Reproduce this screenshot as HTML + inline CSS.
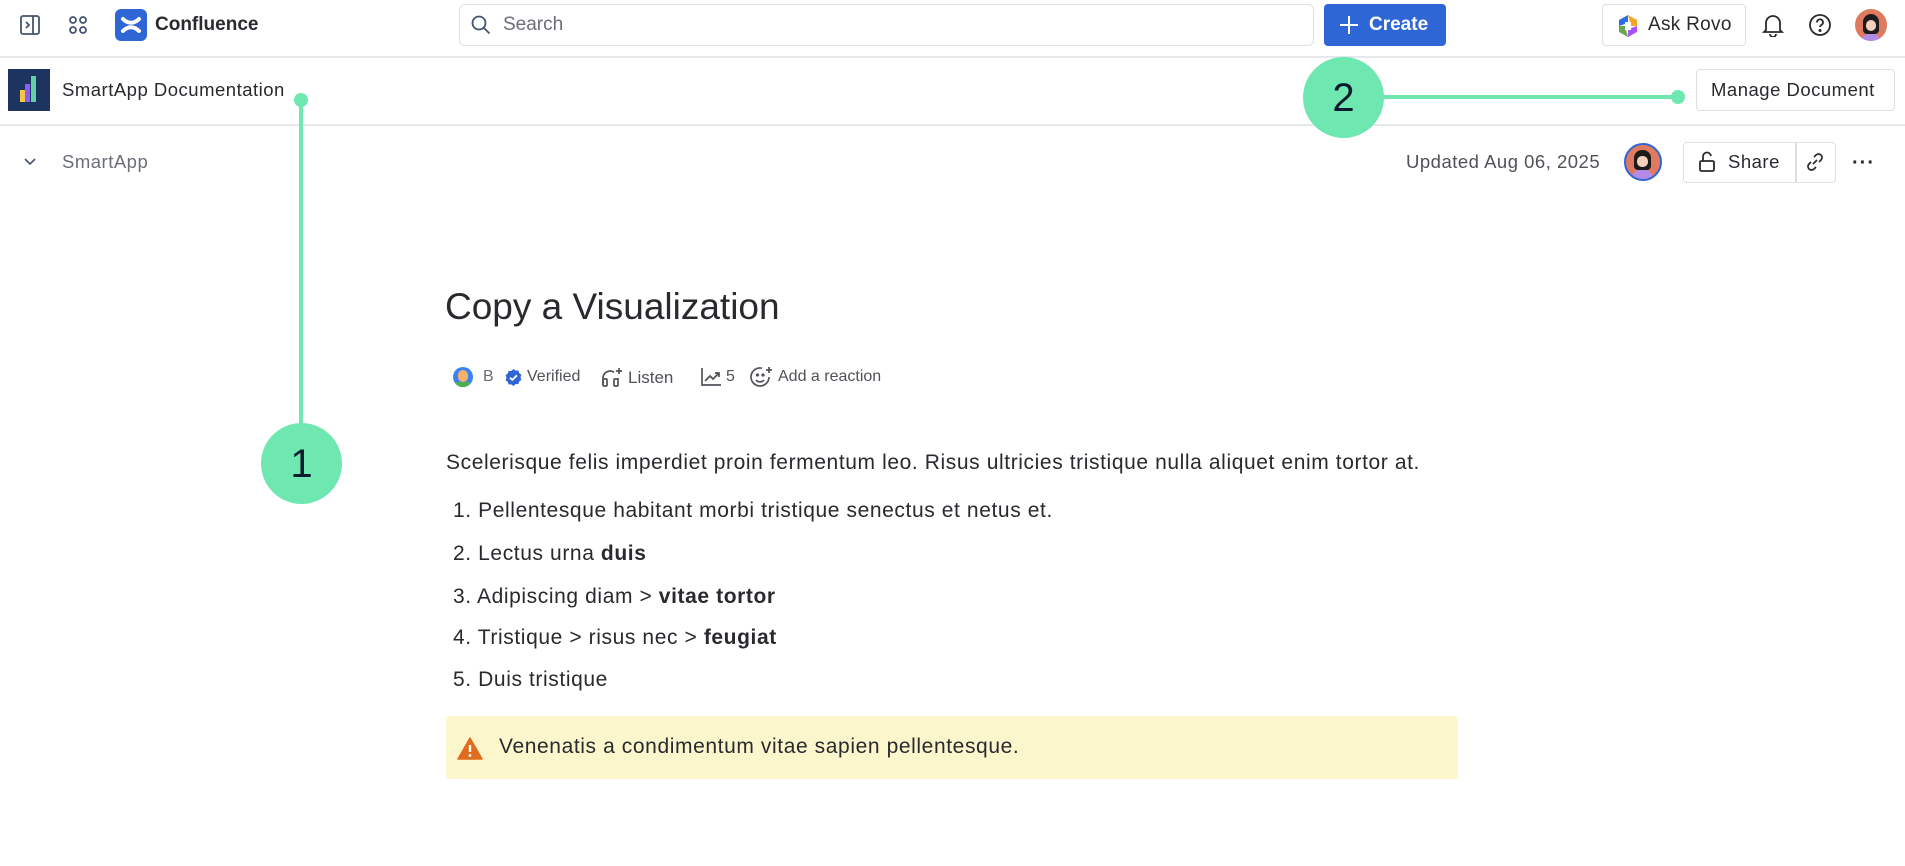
<!DOCTYPE html>
<html><head><meta charset="utf-8"><style>
*{box-sizing:border-box;margin:0;padding:0}
body{width:1905px;height:866px;position:relative;background:#fff;font-family:"Liberation Sans",sans-serif;color:#292a2e;overflow:hidden}
.a{position:absolute}
.t{position:absolute;white-space:nowrap;line-height:1}
.hr{position:absolute;left:0;width:1905px;height:2px;background:#e6e7ea}
.btn{position:absolute;border:1.5px solid #dcdfe4;border-radius:4px;background:#fff}
.m{font-size:18.5px;letter-spacing:.5px}
.b{font-size:21px;letter-spacing:.6px}
</style></head><body>
<svg class="a" style="left:19px;top:14px" width="22" height="22" viewBox="0 0 22 22" fill="none" stroke="#44546f" stroke-width="1.8"><rect x="2" y="2" width="18" height="18" rx="2"/><path d="M14 2v18M7 8l3 3-3 3"/></svg>
<svg class="a" style="left:67px;top:14px" width="22" height="22" viewBox="0 0 22 22" fill="none" stroke="#44546f" stroke-width="1.8"><circle cx="6" cy="6" r="3"/><circle cx="16" cy="6" r="3"/><circle cx="6" cy="16" r="3"/><circle cx="16" cy="16" r="3"/></svg>
<div class="a" style="left:115px;top:9px;width:32px;height:32px;border-radius:6px;background:#2e66d6"></div>
<svg class="a" style="left:115px;top:9px" width="32" height="32" viewBox="0 0 32 32" fill="none" stroke="#fff" stroke-width="4" stroke-linecap="round"><path d="M8 10c5 5 11 5 16 0M8 22c5-5 11-5 16 0"/></svg>
<div class="t" style="left:155px;top:15px;font-size:19px;font-weight:bold;color:#292a2e">Confluence</div>
<div class="btn" style="left:459px;top:4px;width:855px;height:42px;border-radius:6px"></div>
<svg class="a" style="left:471px;top:15px" width="20" height="20" viewBox="0 0 20 20" fill="none" stroke="#44546f" stroke-width="1.8"><circle cx="8" cy="8" r="6.5"/><path d="M13 13l5.5 5.5"/></svg>
<div class="t" style="left:503px;top:15px;font-size:19px;color:#6b6e76">Search</div>
<div class="a" style="left:1324px;top:4px;width:122px;height:42px;border-radius:4px;background:#2e66d6"></div>
<svg class="a" style="left:1339px;top:15px" width="20" height="20" viewBox="0 0 20 20" stroke="#fff" stroke-width="2"><path d="M10 1v18M1 10h18"/></svg>
<div class="t" style="left:1369px;top:15px;font-size:19px;font-weight:bold;color:#fff">Create</div>
<div class="btn" style="left:1602px;top:4px;width:144px;height:42px"></div>
<svg class="a" style="left:1617px;top:14px" width="22" height="24" viewBox="0 0 22 24"><path d="M11 1l9 5v6h-6z" fill="#f5a623"/><path d="M20 12v6l-9 5v-8z" fill="#a855f7"/><path d="M11 23l-9-5v-6h6z" fill="#6aa84f"/><path d="M2 12V6l9-5v8z" fill="#2b6fe8"/><rect x="8" y="8" width="6" height="8" fill="#fff"/></svg>
<div class="t" style="left:1648px;top:15px;font-size:19px;letter-spacing:.3px;color:#292a2e">Ask Rovo</div>
<svg class="a" style="left:1762px;top:13px" width="22" height="24" viewBox="0 0 22 24" fill="none" stroke="#292a2e" stroke-width="1.8"><path d="M4 17V10a7 7 0 0114 0v7l2 2H2zM8 21a3 3 0 006 0"/></svg>
<svg class="a" style="left:1808px;top:13px" width="24" height="24" viewBox="0 0 24 24" fill="none" stroke="#292a2e" stroke-width="1.8"><circle cx="12" cy="12" r="10"/><path d="M9 9.5a3 3 0 115 2c-1 .7-2 1.2-2 2.5"/><circle cx="12" cy="17.5" r=".6" fill="#292a2e"/></svg>
<div class="a" style="left:1855px;top:9px;width:32px;height:32px;border-radius:50%;background:#e07a5f;overflow:hidden"><div class="a" style="left:8px;top:5px;width:16px;height:20px;border-radius:8px 8px 4px 4px;background:#1c1c1c"></div><div class="a" style="left:11px;top:11px;width:10px;height:11px;border-radius:5px;background:#f3d1bd"></div><div class="a" style="left:6px;top:25px;width:20px;height:10px;border-radius:8px 8px 0 0;background:#b28ae8"></div></div>
<div class="hr" style="top:56px"></div>
<div class="a" style="left:8px;top:69px;width:42px;height:42px;background:#1d3461"></div>
<div class="a" style="left:20px;top:90px;width:5px;height:12px;background:#f4c542"></div>
<div class="a" style="left:25px;top:84px;width:5px;height:18px;background:#8b5cf6"></div>
<div class="a" style="left:31px;top:76px;width:5px;height:26px;background:#5fd3a5"></div>
<div class="t m" style="left:62px;top:81px;color:#292a2e">SmartApp Documentation</div>
<div class="btn" style="left:1696px;top:69px;width:199px;height:42px"></div>
<div class="t m" style="left:1711px;top:81px;color:#292a2e">Manage Document</div>
<div class="hr" style="top:124px"></div>
<svg class="a" style="left:22px;top:155px" width="16" height="14" viewBox="0 0 16 14" fill="none" stroke="#44546f" stroke-width="1.6"><path d="M3 4l5 5 5-5"/></svg>
<div class="t m" style="left:62px;top:153px;color:#6b6e76">SmartApp</div>
<div class="t m" style="left:1406px;top:153px;color:#505258">Updated Aug 06, 2025</div>
<div class="a" style="left:1624px;top:143px;width:38px;height:38px;border-radius:50%;border:2.5px solid #2e66d6;background:#e07a5f;overflow:hidden"><div class="a" style="left:8px;top:5px;width:17px;height:20px;border-radius:8px 8px 4px 4px;background:#1c1c1c"></div><div class="a" style="left:11px;top:11px;width:11px;height:11px;border-radius:5px;background:#f3d1bd"></div><div class="a" style="left:6px;top:25px;width:21px;height:10px;border-radius:8px 8px 0 0;background:#b28ae8"></div></div>
<div class="btn" style="left:1683px;top:142px;width:153px;height:41px"></div>
<div class="a" style="left:1795px;top:143px;width:1.5px;height:39px;background:#dcdfe4"></div>
<svg class="a" style="left:1698px;top:151px" width="18" height="22" viewBox="0 0 18 22" fill="none" stroke="#292a2e" stroke-width="1.8"><rect x="2" y="10" width="14" height="10" rx="1.5"/><path d="M5 10V6a4 4 0 018-1"/></svg>
<div class="t m" style="left:1728px;top:153px;color:#292a2e">Share</div>
<svg class="a" style="left:1805px;top:152px" width="20" height="20" viewBox="0 0 20 20" fill="none" stroke="#292a2e" stroke-width="1.7"><path d="M8 12l4-4M9 5l2-2a3.5 3.5 0 015 5l-2 2M11 15l-2 2a3.5 3.5 0 01-5-5l2-2"/></svg>
<div class="t" style="left:1852px;top:153px;font-size:20px;color:#292a2e;letter-spacing:1px;font-weight:bold">···</div>
<div class="t" style="left:445px;top:288px;font-size:37px;color:#292a2e">Copy a Visualization</div>
<div class="a" style="left:453px;top:367px;width:20px;height:20px;border-radius:50%;background:#3b82f6;overflow:hidden"><div class="a" style="left:5px;top:3px;width:10px;height:12px;border-radius:5px;background:#f4b26b"></div><div class="a" style="left:3px;top:15px;width:14px;height:6px;background:#4caf50"></div></div>
<div class="t" style="left:483px;top:369px;font-size:16px;color:#6b6e76">B</div>
<svg class="a" style="left:505px;top:369px" width="17" height="17" viewBox="0 0 17 17"><path d="M8.5 0l2.2 1.6 2.7-.1.8 2.6 2.2 1.6-.9 2.6.9 2.6-2.2 1.6-.8 2.6-2.7-.1L8.5 17l-2.2-1.6-2.7.1-.8-2.6L.6 11.3l.9-2.6L.6 6.1l2.2-1.6.8-2.6 2.7.1z" fill="#2e66d6"/><path d="M5 8.7l2.3 2.2L12 6.3" stroke="#fff" stroke-width="1.8" fill="none"/></svg>
<div class="t" style="left:527px;top:369px;font-size:16px;color:#505258">Verified</div>
<svg class="a" style="left:601px;top:366px" width="22" height="22" viewBox="0 0 22 22" fill="none" stroke="#505258" stroke-width="1.7"><path d="M2 19v-7a7 7 0 0111-5.7"/><rect x="2" y="13" width="4" height="7" rx="1"/><rect x="13" y="13" width="4" height="7" rx="1"/><path d="M17 13v-1M18 2v6M15 5h6"/></svg>
<div class="t" style="left:628px;top:369px;font-size:17px;color:#505258">Listen</div>
<svg class="a" style="left:700px;top:367px" width="22" height="20" viewBox="0 0 22 20" fill="none" stroke="#505258" stroke-width="1.7"><path d="M2 1v17h19M5 14l5-5 3 3 6-6M15 6h4v4"/></svg>
<div class="t" style="left:726px;top:369px;font-size:16px;color:#505258">5</div>
<svg class="a" style="left:750px;top:366px" width="24" height="22" viewBox="0 0 24 22" fill="none" stroke="#505258" stroke-width="1.7"><path d="M19 11a9 9 0 11-7-8.8"/><circle cx="7.5" cy="9" r=".8" fill="#505258"/><circle cx="13" cy="9" r=".8" fill="#505258"/><path d="M6 14c2 2.5 6 2.5 8 0M19 1v6M16 4h6"/></svg>
<div class="t" style="left:778px;top:369px;font-size:16px;color:#505258">Add a reaction</div>
<div class="t b" style="left:446px;top:452px;color:#292a2e">Scelerisque felis imperdiet proin fermentum leo. Risus ultricies tristique nulla aliquet enim tortor at.</div>
<div class="t b" style="left:453px;top:500px">1. Pellentesque habitant morbi tristique senectus et netus et.</div>
<div class="t b" style="left:453px;top:543px">2. Lectus urna <b>duis</b></div>
<div class="t b" style="left:453px;top:586px">3. Adipiscing diam &gt; <b>vitae tortor</b></div>
<div class="t b" style="left:453px;top:627px">4. Tristique &gt; risus nec &gt; <b>feugiat</b></div>
<div class="t b" style="left:453px;top:669px">5. Duis tristique</div>
<div class="a" style="left:446px;top:716px;width:1012px;height:63px;background:#fcf6cc;border-radius:3px"></div>
<svg class="a" style="left:457px;top:737px" width="26" height="23" viewBox="0 0 26 23"><path d="M13 1l12 21H1z" fill="#e06c1f" stroke="#e06c1f" stroke-linejoin="round" stroke-width="1.5"/><path d="M13 8v7" stroke="#fff" stroke-width="2.4"/><circle cx="13" cy="18.5" r="1.4" fill="#fff"/></svg>
<div class="t b" style="left:499px;top:736px">Venenatis a condimentum vitae sapien pellentesque.</div>
<div class="a" style="left:299px;top:99px;width:4px;height:330px;background:#6ee7b0"></div>
<div class="a" style="left:294px;top:93px;width:14px;height:14px;border-radius:50%;background:#6ee7b0"></div>
<div class="a" style="left:261px;top:423px;width:81px;height:81px;border-radius:50%;background:#6ee7b0"></div>
<div class="t" style="left:261px;top:444px;width:81px;text-align:center;font-size:40px;color:#0a1a2e">1</div>
<div class="a" style="left:1380px;top:95px;width:300px;height:4px;background:#6ee7b0"></div>
<div class="a" style="left:1671px;top:90px;width:14px;height:14px;border-radius:50%;background:#6ee7b0"></div>
<div class="a" style="left:1303px;top:57px;width:81px;height:81px;border-radius:50%;background:#6ee7b0"></div>
<div class="t" style="left:1303px;top:78px;width:81px;text-align:center;font-size:40px;color:#0a1a2e">2</div>
</body></html>
